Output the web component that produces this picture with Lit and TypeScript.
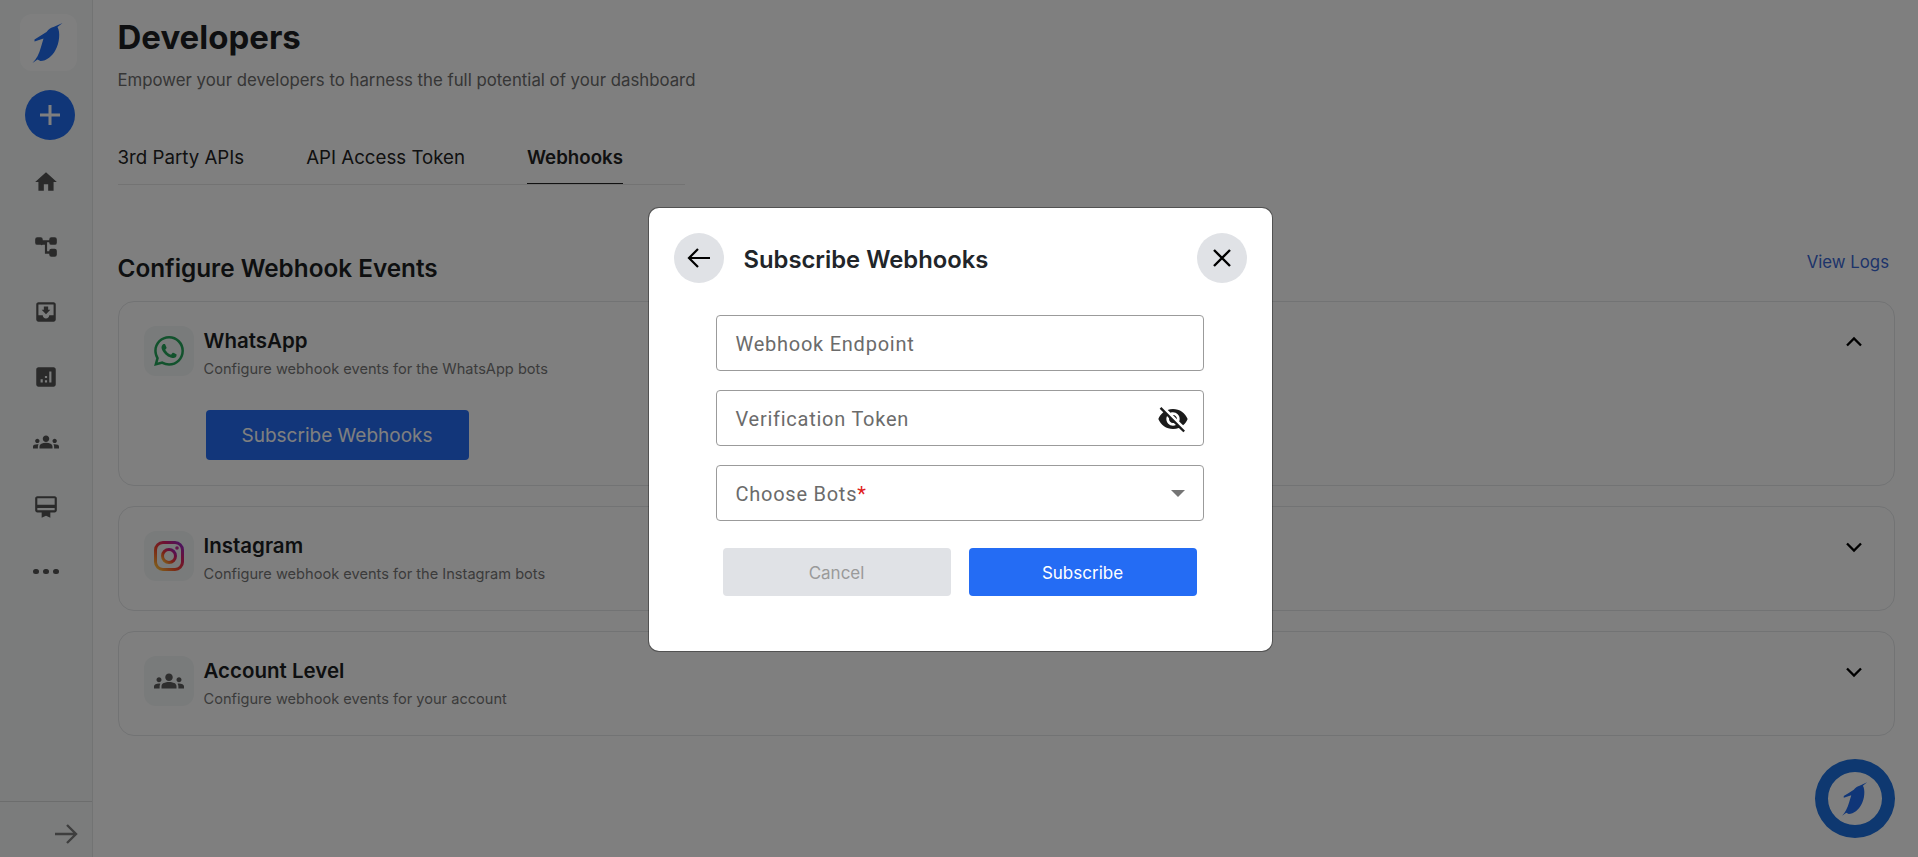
import { LitElement, css, html, svg } from "lit";
import { customElement } from "lit/decorators.js";

const icon = (d: string, size = 24, fill = "currentColor") => html`<svg
    width=${size}
    height=${size}
    viewBox="0 0 24 24"
    fill=${fill}
>
    <path d=${d}></path>
</svg>`;

const GROUPS =
    "M12 12.75c1.63 0 3.07.39 4.24.9 1.08.48 1.76 1.56 1.76 2.73V18H6v-1.61c0-1.18.68-2.26 1.76-2.73 1.17-.52 2.61-.91 4.24-.91zM4 13c1.1 0 2-.9 2-2s-.9-2-2-2-2 .9-2 2 .9 2 2 2zm1.13 1.1c-.37-.06-.74-.1-1.13-.1-.99 0-1.93.21-2.78.58C.48 14.9 0 15.62 0 16.43V18h4.5v-1.61c0-.83.23-1.61.63-2.29zM20 13c1.1 0 2-.9 2-2s-.9-2-2-2-2 .9-2 2 .9 2 2 2zm4 3.43c0-.81-.48-1.53-1.22-1.85-.85-.37-1.79-.58-2.78-.58-.39 0-.76.04-1.13.1.4.68.63 1.46.63 2.29V18H24v-1.57zM12 6c1.66 0 3 1.34 3 3s-1.34 3-3 3-3-1.34-3-3 1.34-3 3-3z";
const WHATSAPP =
    "M17.472 14.382c-.297-.149-1.758-.867-2.03-.967-.273-.099-.471-.148-.67.15-.197.297-.767.966-.94 1.164-.173.199-.347.223-.644.075-.297-.15-1.255-.463-2.39-1.475-.883-.788-1.48-1.761-1.653-2.059-.173-.297-.018-.458.13-.606.134-.133.298-.347.446-.52.149-.174.198-.298.298-.497.099-.198.05-.371-.025-.52-.075-.149-.669-1.612-.916-2.207-.242-.579-.487-.5-.669-.51-.173-.008-.371-.01-.57-.01-.198 0-.52.074-.792.372-.272.297-1.04 1.016-1.04 2.479 0 1.462 1.065 2.875 1.213 3.074.149.198 2.096 3.2 5.077 4.487.709.306 1.262.489 1.694.625.712.227 1.36.195 1.871.118.571-.085 1.758-.719 2.006-1.413.248-.694.248-1.289.173-1.413-.074-.124-.272-.198-.57-.347m-5.421 7.403h-.004a9.87 9.87 0 01-5.031-1.378l-.361-.214-3.741.982.998-3.648-.235-.374a9.86 9.86 0 01-1.51-5.26c.001-5.45 4.436-9.884 9.888-9.884 2.64 0 5.122 1.03 6.988 2.898a9.825 9.825 0 012.893 6.994c-.003 5.45-4.437 9.884-9.885 9.884m8.413-18.297A11.815 11.815 0 0012.05 0C5.495 0 .16 5.335.157 11.892c0 2.096.547 4.142 1.588 5.945L.057 24l6.305-1.654a11.882 11.882 0 005.683 1.448h.005c6.554 0 11.89-5.335 11.893-11.893a11.821 11.821 0 00-3.48-8.413z";
const VISIBILITY_OFF =
    "M12 7c2.76 0 5 2.24 5 5 0 .65-.13 1.26-.36 1.83l2.92 2.92c1.51-1.26 2.7-2.89 3.43-4.75-1.73-4.39-6-7.5-11-7.5-1.4 0-2.74.25-3.98.7l2.16 2.16C10.74 7.13 11.35 7 12 7zM2 4.27l2.28 2.28.46.46C3.08 8.3 1.78 10.02 1 12c1.73 4.39 6 7.5 11 7.5 1.55 0 3.03-.3 4.38-.84l.42.42L19.73 22 21 20.73 3.27 3 2 4.27zM7.53 9.8l1.55 1.55c-.05.21-.08.43-.08.65 0 1.66 1.34 3 3 3 .22 0 .44-.03.65-.08l1.55 1.55c-.67.33-1.41.53-2.2.53-2.76 0-5-2.24-5-5 0-.79.2-1.53.53-2.2zm4.31-.78l3.15 3.15.02-.16c0-1.66-1.34-3-3-3l-.17.01z";

const penguin = (size: number, color: string) => html`<svg
    width=${size}
    height=${size}
    viewBox="-2.5 0 48 48"
>
    <path
        fill=${color}
        d="M36 4 L31 8 C34 13 33 24 29 31 C26 37 20 42 14 42 L11 40.5 L6 44 C10 40 12.5 35 14.5 28 L17 19.5 L8 22.5 L8 20.5 C12 18 16 15.5 20 13 C22 10 25 8.5 27 8 Z"
    ></path>
</svg>`;

const instagram = svg`<svg width="30" height="30" viewBox="0 0 30 30" fill="none">
    <defs>
        <linearGradient id="ig" x1="0" y1="1" x2="1" y2="0">
            <stop offset="0" stop-color="#ffc93a"></stop>
            <stop offset="0.4" stop-color="#f5482b"></stop>
            <stop offset="0.7" stop-color="#d81f6d"></stop>
            <stop offset="1" stop-color="#8a2bd0"></stop>
        </linearGradient>
    </defs>
    <rect x="1.5" y="1.5" width="27" height="27" rx="7.5" stroke="url(#ig)" stroke-width="3"></rect>
    <circle cx="15" cy="15" r="6.5" stroke="url(#ig)" stroke-width="3"></circle>
    <circle cx="23" cy="7" r="1.8" fill="#c72a9a"></circle>
</svg>`;

const chevron = (up: boolean) => html`<svg
    class="chevron"
    width="28"
    height="28"
    viewBox="0 0 24 24"
    fill="none"
    stroke="#000"
    stroke-width="2"
>
    <path d=${up ? "M6 15l6-6 6 6" : "M6 9l6 6 6-6"}></path>
</svg>`;

const navIcons = [
    "M10 20v-6h4v6h5v-8h3L12 3 2 12h3v8z",
    "M2 5a2 2 0 0 1 2-2h3a2 2 0 0 1 2 2v.8h6V5a2 2 0 0 1 2-2h3a2 2 0 0 1 2 2v3a2 2 0 0 1-2 2h-3a2 2 0 0 1-2-2v-.4h-2V16h2v-.5a2 2 0 0 1 2-2h3a2 2 0 0 1 2 2V19a2 2 0 0 1-2 2h-3a2 2 0 0 1-2-2v-.7h-4V10H9a2 2 0 0 1-2 0H4a2 2 0 0 1-2-2z",
    "M19 3H5c-1.1 0-2 .9-2 2v14c0 1.1.9 2 2 2h14c1.1 0 2-.9 2-2V5c0-1.1-.9-2-2-2zm0 12h-4c0 1.66-1.35 3-3 3s-3-1.34-3-3H5V5h14v10zm-3-5h-2V7h-4v3H8l4 4 4-4z",
    "M19 3H5c-1.1 0-2 .9-2 2v14c0 1.1.9 2 2 2h14c1.1 0 2-.9 2-2V5c0-1.1-.9-2-2-2zM9 17H7v-3h2v3zm4 0h-2v-2h2v2zm0-4h-2v-2h2v2zm4 4h-2V7h2v10z",
    GROUPS,
    "M20 2H4c-1.11 0-2 .89-2 2v11c0 1.11.89 2 2 2h4v5l4-2 4 2v-5h4c1.11 0 2-.89 2-2V4c0-1.11-.89-2-2-2zm0 13H4v-2h16v2zm0-5H4V4h16v6z",
];

@customElement("app-root")
export class AppRoot extends LitElement {
    renderCard(
        title: string,
        desc: string,
        graphic: unknown,
        open = false
    ) {
        return html`
            <section class="card ${open ? "open" : ""}">
                <div class="card-head">
                    <div class="card-icon">${graphic}</div>
                    <div class="card-text">
                        <div class="card-title">${title}</div>
                        <div class="card-desc">${desc}</div>
                    </div>
                    ${chevron(open)}
                </div>
                ${open
                    ? html`<button class="primary-btn" type="button">
                          Subscribe Webhooks
                      </button>`
                    : ""}
            </section>
        `;
    }

    render() {
        return html`
            <aside class="sidebar">
                <div class="nav-top">
                    <div class="logo">${penguin(48, "#206cf0")}</div>
                    <div class="add">
                        <svg width="28" height="28" viewBox="0 0 28 28" fill="none" stroke="#fff" stroke-width="3">
                            <path d="M14 4v20M4 14h20"></path>
                        </svg>
                    </div>
                    ${navIcons.map(
                        (d) => html`<div class="nav-item">${icon(d, 26)}</div>`
                    )}
                    <div class="nav-item dots">
                        <span></span><span></span><span></span>
                    </div>
                </div>
                <div class="nav-bottom">
                    <svg width="24" height="24" viewBox="0 0 24 24" fill="none" stroke="#7c7c7c" stroke-width="2.4">
                        <path d="M1 12h21M13 3l9 9-9 9"></path>
                    </svg>
                </div>
            </aside>

            <main class="content">
                <h1>Developers</h1>
                <p class="subtitle">
                    Empower your developers to harness the full potential of your dashboard
                </p>
                <nav class="tabs">
                    <span class="tab">3rd Party APIs</span>
                    <span class="tab">API Access Token</span>
                    <span class="tab active">Webhooks</span>
                </nav>
                <div class="section-head">
                    <h2>Configure Webhook Events</h2>
                    <a class="logs">View Logs</a>
                </div>
                <div class="cards">
                    ${this.renderCard(
                        "WhatsApp",
                        "Configure webhook events for the WhatsApp bots",
                        icon(WHATSAPP, 30, "#25a55a"),
                        true
                    )}
                    ${this.renderCard(
                        "Instagram",
                        "Configure webhook events for the Instagram bots",
                        instagram
                    )}
                    ${this.renderCard(
                        "Account Level",
                        "Configure webhook events for your account",
                        icon(GROUPS, 30, "#5c5c5c")
                    )}
                </div>
            </main>

            <div class="fab">${penguin(40, "#206cf0")}</div>

            <div class="overlay">
                <div class="modal">
                    <header class="modal-head">
                        <button class="round" type="button">
                            <svg width="28" height="28" viewBox="0 0 28 28" fill="none" stroke="#000" stroke-width="2.2">
                                <path d="M25 14H4M13 5l-9 9 9 9"></path>
                            </svg>
                        </button>
                        <h3>Subscribe Webhooks</h3>
                        <button class="round close" type="button">
                            <svg width="28" height="28" viewBox="0 0 28 28" fill="none" stroke="#000" stroke-width="2.4">
                                <path d="M6 6l16 16M22 6L6 22"></path>
                            </svg>
                        </button>
                    </header>
                    <div class="form">
                        <div class="field"><span>Webhook Endpoint</span></div>
                        <div class="field">
                            <span>Verification Token</span>
                            ${icon(VISIBILITY_OFF, 32, "#1b1b1b")}
                        </div>
                        <div class="field">
                            <span>Choose Bots<em>*</em></span>
                            <i class="caret"></i>
                        </div>
                        <div class="actions">
                            <button class="btn cancel" type="button">Cancel</button>
                            <button class="btn submit" type="button">Subscribe</button>
                        </div>
                    </div>
                </div>
            </div>
        `;
    }

    static styles = css`
        :host {
            display: flex;
            width: 100%;
            height: 857px;
            overflow: hidden;
            position: relative;
            background: #fff;
            color: #212529;
            font-family: Inter, "Liberation Sans", sans-serif;
        }

        .sidebar {
            width: 92px;
            flex: none;
            display: flex;
            flex-direction: column;
            background: #f6f9f9;
            border-right: 1px solid #e4e6e6;
        }

        .nav-top {
            flex: 1;
            display: flex;
            flex-direction: column;
            align-items: center;
            padding-top: 14px;
        }

        .logo {
            width: 57px;
            height: 57px;
            border-radius: 12px;
            background: #ffffff;
            display: flex;
            align-items: center;
            justify-content: center;
            margin-left: 4px;
        }

        .add {
            width: 50px;
            height: 50px;
            border-radius: 50%;
            margin: 19px 0 9px 8px;
            background: #206cf0;
            display: flex;
            align-items: center;
            justify-content: center;
        }

        .nav-item {
            height: 65px;
            flex: none;
            display: flex;
            align-items: center;
            justify-content: center;
            color: #545454;
            width: 100%;
        }

        .nav-item svg {
            display: block;
        }

        .dots {
            gap: 4.5px;
        }

        .dots span {
            width: 5.5px;
            height: 5.5px;
            border-radius: 50%;
            background: #545454;
        }

        .nav-bottom {
            height: 56px;
            box-sizing: border-box;
            padding: 9px 14px 0 0;
            border-top: 1px solid #d8dada;
            display: flex;
            align-items: center;
            justify-content: flex-end;
        }

        .content {
            flex: 1;
            min-width: 0;
            padding: 17px 23px 0 24.5px;
        }

        h1 {
            margin: 0;
            font-size: 33px;
            line-height: 40px;
            font-weight: 700;
            color: #1c1f22;
        }

        .subtitle {
            margin: 12px 0 0;
            font-size: 16.8px;
            line-height: 22px;
            color: #6c6c6c;
        }

        .tabs {
            display: flex;
            gap: 62px;
            width: 567px;
            margin-top: 55px;
            border-bottom: 1px solid #e6e6e6;
        }

        .tab {
            font-size: 18.7px;
            line-height: 24px;
            padding-bottom: 14px;
            color: #222;
        }

        .tab.active {
            font-weight: 600;
            border-bottom: 1px solid #222;
            padding-bottom: 13px;
        }

        .section-head {
            display: flex;
            align-items: center;
            justify-content: space-between;
            margin-top: 68px;
            padding-right: 6px;
        }

        h2 {
            margin: 0;
            font-size: 24.3px;
            line-height: 30px;
            font-weight: 600;
            color: #1c1f22;
        }

        .logs {
            font-size: 16.8px;
            color: #3a68d4;
            position: relative;
            top: -6px;
        }

        .cards {
            display: flex;
            flex-direction: column;
            gap: 20px;
            margin-top: 18px;
        }

        .card {
            border: 1px solid #e4e6e8;
            border-radius: 16px;
            padding: 24px 26px 25px 25px;
            height: 105px;
            box-sizing: border-box;
        }

        .card.open {
            height: 185px;
        }

        .card-head {
            display: flex;
            align-items: flex-start;
            gap: 10px;
            height: 51px;
        }

        .card-icon {
            width: 50px;
            height: 50px;
            flex: none;
            border-radius: 12px;
            background: #f3f6f6;
            display: flex;
            align-items: center;
            justify-content: center;
        }

        .card-text {
            flex: 1;
            min-width: 0;
            padding-top: 2px;
        }

        .card-title {
            font-size: 20.5px;
            line-height: 26px;
            font-weight: 600;
            color: #1c1f22;
        }

        .card-desc {
            margin-top: 5px;
            font-size: 14.6px;
            line-height: 20px;
            color: #777;
        }

        .chevron {
            flex: none;
            margin-top: 2px;
        }

        .primary-btn {
            display: block;
            width: 263px;
            height: 50px;
            margin: 33px 0 0 62px;
            border: 0;
            border-radius: 4px;
            background: #246cf4;
            color: #fff;
            font: 400 19px Inter, "Liberation Sans", sans-serif;
        }

        .fab {
            position: absolute;
            right: 23px;
            bottom: 19px;
            width: 54px;
            height: 53px;
            border: 13px solid #1c70e0;
            border-radius: 50%;
            background: #fff;
            display: flex;
            align-items: center;
            justify-content: center;
        }

        .overlay {
            position: absolute;
            inset: 0;
            background: rgba(0, 0, 0, 0.5);
            display: flex;
            align-items: flex-start;
            justify-content: center;
        }

        .modal {
            width: 623px;
            height: 443px;
            margin: 208px 0 0 2px;
            box-sizing: border-box;
            background: #fff;
            border-radius: 10px;
            padding: 25px 25px 0 25px;
            box-shadow: 0 0 0 1px rgba(0, 0, 0, 0.35);
        }

        .modal-head {
            display: flex;
            align-items: center;
            gap: 20px;
        }

        .modal-head h3 {
            flex: 1;
            margin: 0;
            font-size: 23.8px;
            line-height: 30px;
            font-weight: 600;
            color: #212529;
            position: relative;
            top: 2px;
        }

        .round {
            width: 50px;
            height: 50px;
            flex: none;
            padding: 0;
            border: 0;
            border-radius: 50%;
            background: #e0e2e6;
            display: flex;
            align-items: center;
            justify-content: center;
        }

        .form {
            margin: 32px 43px 0 42px;
            display: flex;
            flex-direction: column;
            gap: 19px;
        }

        .field {
            height: 56px;
            box-sizing: border-box;
            border: 1px solid #9b9b9b;
            border-radius: 4px;
            display: flex;
            align-items: center;
            justify-content: space-between;
            padding: 1px 14px 0 19px;
            font-family: Roboto, "Liberation Sans", sans-serif;
            font-size: 20px;
            letter-spacing: 0.75px;
            color: #6b6b6b;
        }

        .field em {
            color: #e02020;
            font-style: normal;
        }

        .caret {
            width: 0;
            height: 0;
            border-left: 7px solid transparent;
            border-right: 7px solid transparent;
            border-top: 7px solid #757575;
            margin-right: 4px;
        }

        .actions {
            display: flex;
            gap: 18px;
            margin: 8px 7px 0;
        }

        .btn {
            flex: 1;
            height: 48px;
            border: 0;
            padding: 2px 0 0;
            border-radius: 4px;
            font: 400 17px Inter, "Liberation Sans", sans-serif;
        }

        .cancel {
            background: #e0e2e6;
            color: #9a9a9a;
        }

        .submit {
            background: #246cf4;
            color: #fff;
        }
    `;
}
